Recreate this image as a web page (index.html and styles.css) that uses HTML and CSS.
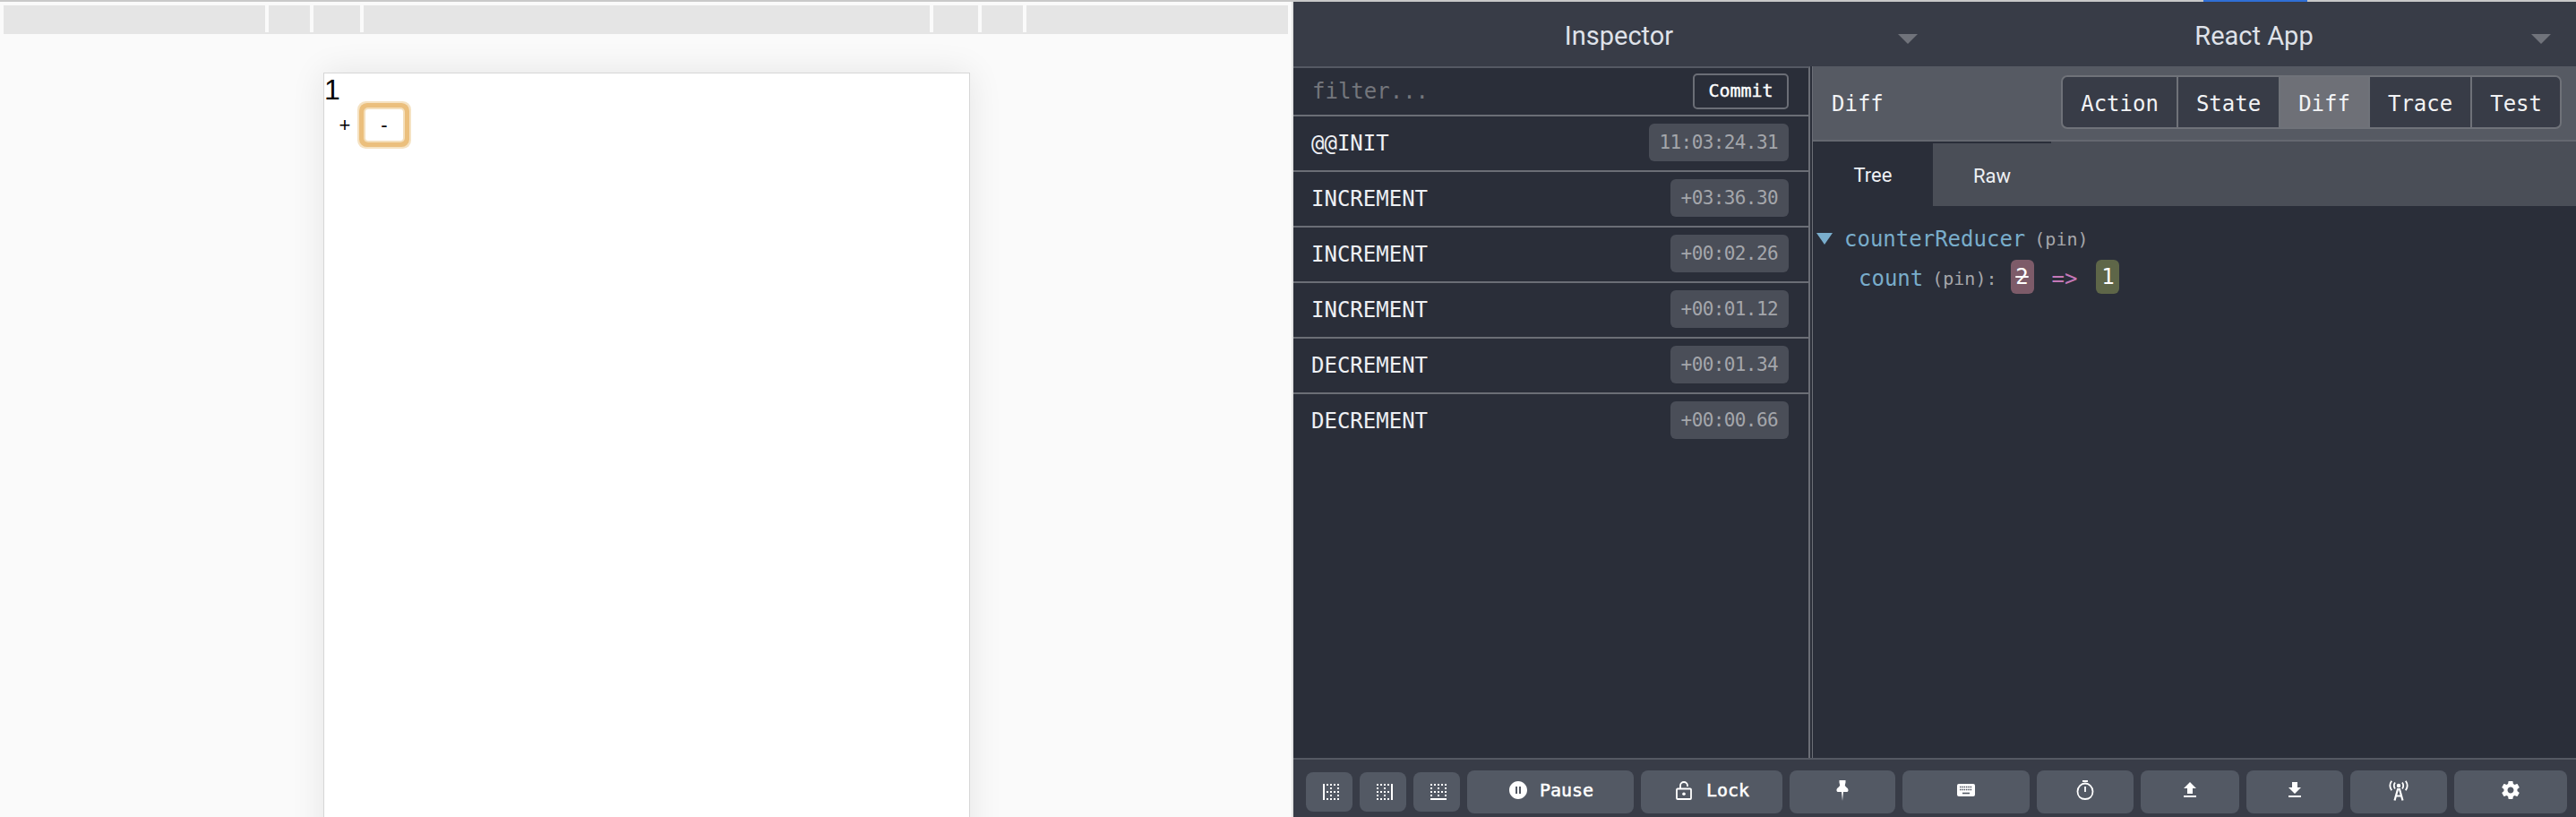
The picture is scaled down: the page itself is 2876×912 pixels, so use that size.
FILE: index.html
```html
<!DOCTYPE html>
<html lang="en">
<head>
<meta charset="utf-8">
<title>Redux DevTools</title>
<link rel="stylesheet" href="styles.css">
</head>
<body>
<svg class="defs" width="0" height="0" aria-hidden="true">
  <symbol id="border-left" viewBox="3 3 18 18"><path d="M11 21h2v-2h-2v2zm0-4h2v-2h-2v2zm0-12h2V3h-2v2zm0 8h2v-2h-2v2zm0-4h2V7h-2v2zm-4 12h2v-2H7v2zm0-16h2V3H7v2zm0 8h2v-2H7v2zM3 21h2V3H3v18zM19 9h2V7h-2v2zm-4 12h2v-2h-2v2zm4-4h2v-2h-2v2zm0-14v2h2V3h-2zm0 10h2v-2h-2v2zm0 8h2v-2h-2v2zm-4-8h2v-2h-2v2zm0-8h2V3h-2v2z"/></symbol>
</svg>
<div class="topline"><div class="progress"></div></div>
<div class="app">
  <main class="left">
    <div class="strip">
      <div></div><i></i><div></div><i></i><div></div><i></i><div></div><i></i><div></div><i></i><div></div><i></i><div></div>
    </div>
    <div class="sheet">
      <div class="count">1</div>
      <div class="controls">
        <button class="btn plus">+</button>
        <button class="btn minus">-</button>
      </div>
    </div>
  </main>
  <section class="devtools">
    <header class="selectors">
      <div class="selector first"><span>Inspector</span><b class="caret"></b></div>
      <div class="selector second"><span>React App</span><b class="caret"></b></div>
    </header>
    <div class="panes">
      <div class="list">
        <div class="filter"><span class="placeholder">filter...</span><button class="commit">Commit</button></div>
        <div class="row"><span>@@INIT</span><time class="stamp">11:03:24.31</time></div>
        <div class="row"><span>INCREMENT</span><time class="stamp">+03:36.30</time></div>
        <div class="row"><span>INCREMENT</span><time class="stamp">+00:02.26</time></div>
        <div class="row"><span>INCREMENT</span><time class="stamp">+00:01.12</time></div>
        <div class="row"><span>DECREMENT</span><time class="stamp">+00:01.34</time></div>
        <div class="row"><span>DECREMENT</span><time class="stamp">+00:00.66</time></div>
      </div>
      <div class="gutter"></div>
      <div class="detail">
        <div class="detail-head">
          <span class="detail-title">Diff</span>
          <div class="segments">
            <span class="seg">Action</span><span class="seg">State</span><span class="seg active">Diff</span><span class="seg">Trace</span><span class="seg">Test</span>
          </div>
        </div>
        <div class="tabs">
          <span class="tab current">Tree</span>
          <span class="tab raw">Raw</span>
        </div>
        <div class="tree">
          <div class="tree-row root"><b class="twisty"></b><span class="key">counterReducer</span><span class="pin">(pin)</span></div>
          <div class="tree-row child"><span class="key">count</span><span class="pin">(pin):</span><s class="val old">2</s><span class="arrow">=&gt;</span><span class="val new">1</span></div>
        </div>
      </div>
    </div>
    <footer class="footer">
      <button class="tool dock"><svg width="18" height="18"><use href="#border-left"/></svg></button>
      <button class="tool dock"><svg width="18" height="18" class="flip"><use href="#border-left"/></svg></button>
      <button class="tool dock"><svg width="18" height="18" class="down"><use href="#border-left"/></svg></button>
      <button class="tool w-pause"><svg width="24" height="24" viewBox="0 0 24 24"><path d="M12 2C6.48 2 2 6.48 2 12s4.48 10 10 10 10-4.48 10-10S17.52 2 12 2zm-1 14H9V8h2v8zm4 0h-2V8h2v8z"/></svg><span>Pause</span></button>
      <button class="tool w-lock"><svg width="18" height="22" viewBox="0 0 18 22"><path class="line" d="M5 9.500V6a4 4 0 0 1 8 0v1M2 9.500h14a1 1 0 0 1 1 1V20a1 1 0 0 1-1 1H2a1 1 0 0 1-1-1v-9.500a1 1 0 0 1 1-1z"/><circle cx="9" cy="15.300" r="1.800"/></svg><span>Lock</span></button>
      <button class="tool w-pin"><svg width="14" height="23" viewBox="0 0 14 23"><path d="M3.500 0h7v2.500L9.800 5.500C9.900 7.500 14 8.500 13.500 11.500c-.2 1-1 1.500-2 1.500H8L7 23 6 13H2.500c-1 0-1.800-.5-2-1.500C0 8.500 4.100 7.500 4.200 5.500L3.500 2.500z"/></svg></button>
      <button class="tool w-keys"><svg width="20" height="14" viewBox="0 0 20 14"><rect width="20" height="14" rx="2"/><path class="keys" d="M3 3.500h14M3 6.500h14"/><path class="space" d="M6 10.500h8"/></svg></button>
      <button class="tool w-timer"><svg width="20" height="22" viewBox="0 0 20 22"><path d="M7 0h6v2H7z"/><path class="line" d="M10 3.500c4.400 0 8.500 3.700 8.500 9s-3.600 8.500-8.500 8.500-8.500-3.200-8.500-8.500 4.100-9 8.500-9zM10 7v6"/></svg></button>
      <button class="tool w-up"><svg width="24" height="24" viewBox="0 0 24 24"><path d="M9 16h6v-6h4l-7-7-7 7h4zm-4 2h14v2H5z"/></svg></button>
      <button class="tool w-down"><svg width="24" height="24" viewBox="0 0 24 24"><path d="M19 9h-4V3H9v6H5l7 7 7-7zM5 18v2h14v-2H5z"/></svg></button>
      <button class="tool w-cast"><svg width="24" height="23" viewBox="0 0 24 23"><circle cx="12" cy="6" r="2.200"/><path class="line" d="M8 2.500c-1.400 2-1.400 5 0 7M16 2.500c1.400 2 1.400 5 0 7M4.200.8c-2.300 3.200-2.300 7.200 0 10.400M19.800.8c2.300 3.200 2.300 7.200 0 10.400"/><path class="line thick" d="M7.500 22.500 11 10h2l3.500 12.500M9 17.500h6"/></svg></button>
      <button class="tool w-gear"><svg width="24" height="24" viewBox="0 0 24 24"><path d="M19.430 12.980c.04-.32.07-.64.07-.98s-.03-.66-.07-.98l2.110-1.650c.19-.15.24-.42.12-.64l-2-3.460c-.12-.22-.39-.3-.61-.22l-2.490 1c-.52-.4-1.080-.73-1.690-.98l-.38-2.650C14.460 2.180 14.250 2 14 2h-4c-.25 0-.46.18-.49.42l-.38 2.650c-.61.25-1.170.59-1.690.98l-2.490-1c-.23-.09-.49 0-.61.22l-2 3.460c-.13.22-.07.49.12.64l2.110 1.650c-.04.32-.07.65-.07.98s.03.66.07.98l-2.110 1.650c-.19.15-.24.42-.12.64l2 3.460c.12.22.39.3.61.22l2.490-1c.52.4 1.080.73 1.690.98l.38 2.650c.03.24.24.42.49.42h4c.25 0 .46-.18.49-.42l.38-2.650c.61-.25 1.170-.59 1.690-.98l2.490 1c.23.09.49 0 .61-.22l2-3.460c.12-.22.07-.49-.12-.64l-2.110-1.650zM12 15.500c-1.930 0-3.500-1.570-3.500-3.500s1.570-3.500 3.500-3.500 3.500 1.570 3.500 3.500-1.570 3.500-3.500 3.500z"/></svg></button>
    </footer>
  </section>
</div>
</body>
</html>
```
FILE: styles.css
```css
* { box-sizing: border-box; }
html, body { margin: 0; padding: 0; height: 100%; overflow: hidden; }
body { width: 2876px; height: 912px; font-family: "DejaVu Sans Mono", monospace; background: #fafafa; }
button { font: inherit; }
.defs { display: block; height: 0; }

.topline { height: 2px; background: #c9c9c9; }
.progress { width: 116px; height: 2px; margin-left: 2460px; background: #2f6fd6; }

.app { display: flex; height: 910px; }

/* left: demo page */
.left { width: 1444px; height: 910px; overflow: hidden; background: #fafafa; border-right: 2px solid #e3e3e3; padding-top: 4px; flex: none; }
.strip { display: grid; grid-template-columns: 292px 4px 46px 4px 52px 4px 632px 4px 50px 4px 46px 4px 292px; height: 32px; margin-left: 4px; width: 1434px; background: #e5e5e5; }
.strip i { display: block; height: 30px; background: #fafafa; }
.sheet { width: 722px; height: 900px; margin: 43px 0 0 361px; background: #fff; border: 1px solid #d6d6d6; box-shadow: 0 0 36px rgba(0, 0, 0, .09); font-family: "Liberation Sans", Arial, sans-serif; color: #000; }
.count { font-size: 32px; line-height: 36px; height: 30px; }
.controls { display: flex; margin-left: 10px; margin-top: 10px; }
.btn { background: #fff; border: 0; padding: 0; font-size: 22px; color: #000; height: 35px; line-height: 35px; font-family: "Liberation Sans", Arial, sans-serif; }
.plus { width: 26px; margin-right: 10px; }
.minus { width: 42px; border-radius: 3px; box-shadow: 0 0 0 2px #f4dfbb, 0 0 0 7px #ebbf7d, 0 0 0 9px #f5e2c2; }

/* devtools */
.devtools { flex: 1; display: flex; flex-direction: column; background: #2a2e39; color: #fff; min-width: 0; }
.selectors { display: flex; height: 72px; flex: none; background: #383c47; font-family: Roboto, sans-serif; font-size: 29px; color: #dfe2e9; }
.selector { position: relative; display: flex; align-items: center; justify-content: center; padding-top: 4px; }
.selector.first { width: 725px; padding-left: 2px; }
.selector.second { flex: 1; padding-right: 12px; }
.caret { position: absolute; top: 36px; right: 28px; width: 0; height: 0; border-left: 11px solid transparent; border-right: 11px solid transparent; border-top: 11px solid #70737b; }

.panes { flex: 1; display: flex; min-height: 0; }
.list { width: 577px; flex: none; border-top: 2px solid #555963; border-right: 2px solid #6b6e76; font-size: 24px; color: #eef0f4; }
.filter { display: flex; align-items: flex-start; justify-content: space-between; height: 54px; padding: 6px 22px 0 21px; border-bottom: 2px solid #6b6e76; }
.placeholder { color: #74767c; line-height: 40px; }
.commit { height: 40px; width: 107px; padding: 0 0 2px; background: transparent; border: 2px solid #6b6e76; border-radius: 5px; color: #fff; font-size: 20px; -webkit-text-stroke: .4px #fff; }
.row { display: flex; justify-content: space-between; align-items: flex-start; height: 62px; padding: 8px 22px 0 20px; border-bottom: 2px solid #6b6e76; }
.row:last-child { border-bottom: 0; }
.row > span { line-height: 42px; padding-top: 1px; }
.stamp { height: 42px; padding: 0 12px; line-height: 42px; border-radius: 6px; background: #4a4e58; color: #a4a6ab; font-size: 21px; letter-spacing: -.6px; }
.gutter { width: 2px; flex: none; margin-top: 2px; }

.detail { flex: 1; display: flex; flex-direction: column; border-left: 1px solid #6b6e76; min-width: 0; }
.detail-head { display: flex; align-items: center; justify-content: space-between; height: 84px; flex: none; padding: 0 16px 2px 21px; background: #565a63; border-bottom: 2px solid #656870; font-size: 24px; }
.detail-title { color: #f2f3f5; padding-top: 3px; }
.segments { display: flex; height: 60px; border: 2px solid #6f7279; border-radius: 7px; overflow: hidden; background: #383c47; }
.seg { display: flex; align-items: center; padding: 4px 20px 0; border-left: 2px solid #6f7279; color: #f2f3f5; }
.seg:first-child { border-left: 0; }
.seg.active { background: #6e7077; }
.tabs { display: flex; height: 72px; flex: none; background: #4a4e57; font-family: Roboto, sans-serif; font-size: 22px; color: #eef0f4; }
.tab { display: flex; align-items: center; justify-content: center; padding-top: 2px; }
.tab.current { width: 134px; background: #2a2e39; }
.tab.raw { width: 132px; border-top: 2px solid #2a2e39; }

.tree { padding: 13px 0 0 4px; }
.tree-row { display: flex; align-items: center; height: 44px; }
.twisty { width: 0; height: 0; margin: 2px 13px 0 0; border-left: 9.500px solid transparent; border-right: 9.500px solid transparent; border-top: 13px solid #7aaecd; }
.key { color: #79adcb; font-size: 24px; padding-top: 3px; }
.pin { color: #a6a7ab; font-size: 20px; margin-left: 10px; padding-top: 3px; }
.child { padding-left: 47px; }
.val { width: 26px; height: 38px; line-height: 38px; text-align: center; border-radius: 6px; font-size: 24px; color: #fff; }
.old { background: #7d5b69; margin-left: 15px; }
.new { background: #5e6648; }
.arrow { color: #c578b8; font-size: 24px; margin: 0 21px 0 20px; padding-top: 3px; }

.footer { display: flex; gap: 8px; align-items: center; height: 66px; flex: none; padding: 8px 10px 0 14px; background: #383c47; border-top: 2px solid #555963; }
.tool { display: flex; align-items: center; justify-content: center; gap: 12px; height: 48px; padding: 0 0 4px; border: 0; border-radius: 8px; background: #535964; color: #fff; font-size: 20px; -webkit-text-stroke: .5px #fff; }
.tool svg { fill: #fff; flex: none; -webkit-text-stroke: 0; }
.tool .line { fill: none; stroke: #fff; stroke-width: 1.800; }
.tool .thick { stroke-width: 2.200; }
.tool .keys { fill: none; stroke: #535964; stroke-width: 1.600; stroke-dasharray: 1.500 .8; }
.tool .space { fill: none; stroke: #535964; stroke-width: 1.600; }
.dock { width: 52px; height: 44px; padding: 0 0 0 4px; }
.flip { transform: scaleX(-1); }
.down { transform: rotate(-90deg); }
.w-pause { width: 186px; }
.w-lock { width: 158px; gap: 16px; padding-left: 2px; }
.w-pin { width: 118px; }
.w-keys { width: 142px; }
.w-timer { width: 108px; }
.w-up { width: 110px; }
.w-down { width: 108px; }
.w-cast { width: 108px; }
.w-gear { width: 126px; }
```
